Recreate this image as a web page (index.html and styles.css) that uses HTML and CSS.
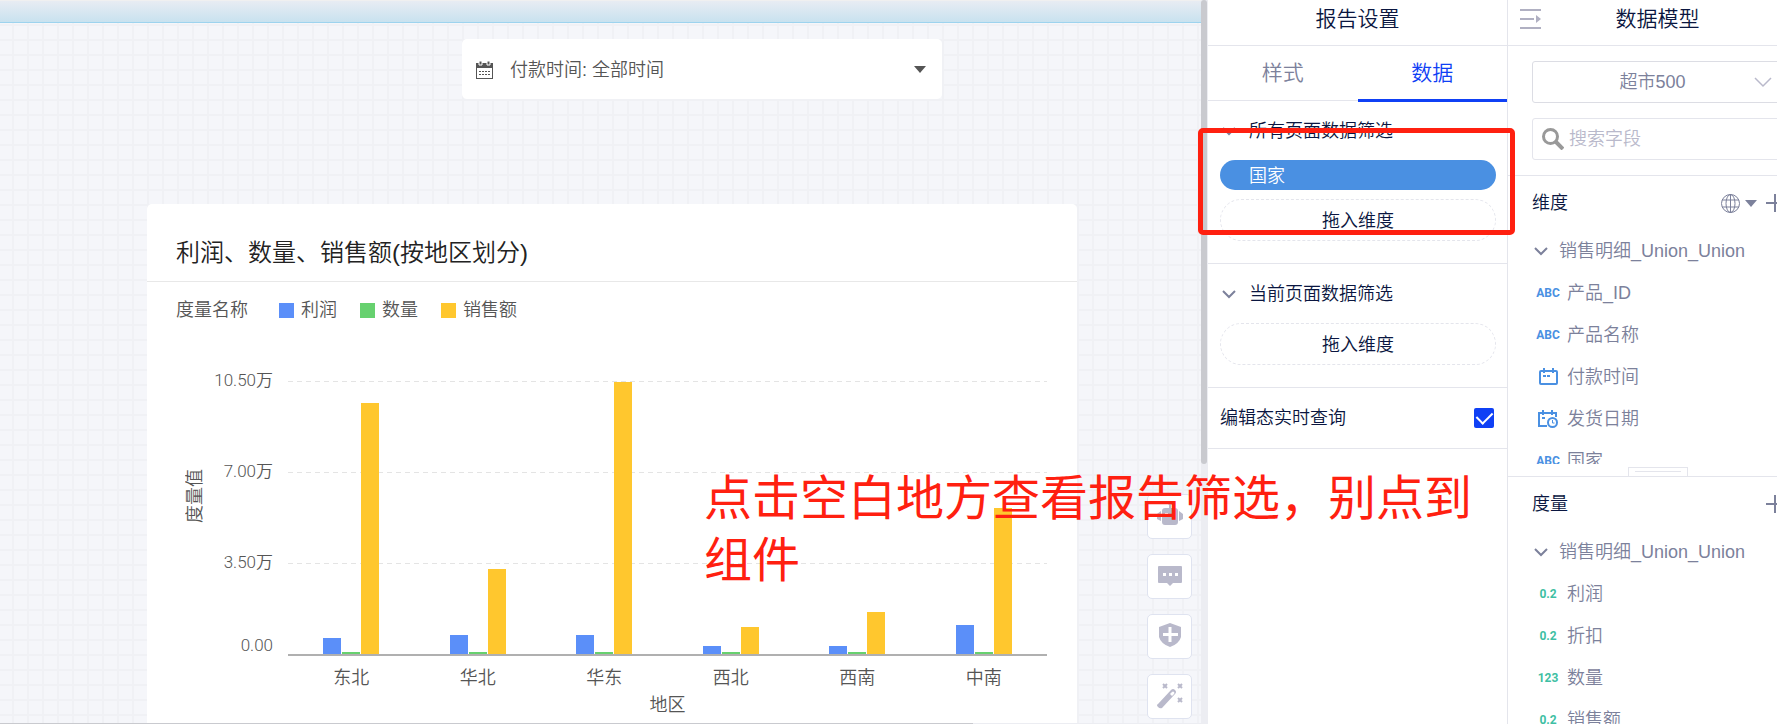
FILE: index.html
```html
<!DOCTYPE html>
<html lang="zh-CN">
<head>
    <meta charset="utf-8">
    <meta name="viewport" content="width=device-width, initial-scale=1.0">
    <title>报告设置</title>
    <link rel="stylesheet" href="styles.css">
</head>
<body>
<div class="app">
    <main class="canvas">
        <div class="dropBar"></div>
        <button class="filterCard" type="button">
            <svg class="calIcon" width="17" height="18" viewBox="0 0 17 18">
                <path d="M0 2h17v16H0z" fill="#555"/>
                <path d="M1 7h15v10H1z" fill="#fff"/>
                <path d="M3 0h3v4H3zM11 0h3v4h-3z" fill="#555" stroke="#fff" stroke-width="1"/>
                <path d="M3 10.500h11M3 13.500h11" stroke="#555" stroke-dasharray="2 1"/>
            </svg>
            <span>付款时间: 全部时间</span>
            <svg class="caret" width="12" height="7" viewBox="0 0 12 7"><path d="M0 0h12L6 7z" fill="#555"/></svg>
        </button>

        <section class="chartCard">
            <h2>利润、数量、销售额(按地区划分)</h2>
            <div class="legend">
                <span class="legendName">度量名称</span>
                <span class="legendItem"><i class="profit"></i>利润</span>
                <span class="legendItem"><i class="count"></i>数量</span>
                <span class="legendItem"><i class="sales"></i>销售额</span>
            </div>
            <div class="chart">
                <div class="yTitle">度量值</div>
                <div class="yAxis"><span>10.50万</span><span>7.00万</span><span>3.50万</span><span>0.00</span></div>
                <div class="plot">
                    <div class="gridLine"></div>
                    <div class="gridLine"></div>
                    <div class="gridLine"></div>
                    <div class="bars">
                        <div class="group"><i class="profit" style="height:6%"></i><i class="count"></i><i class="sales" style="height:92%"></i></div>
                        <div class="group"><i class="profit" style="height:7%"></i><i class="count"></i><i class="sales" style="height:31%"></i></div>
                        <div class="group"><i class="profit" style="height:7%"></i><i class="count"></i><i class="sales" style="height:99.600%"></i></div>
                        <div class="group"><i class="profit" style="height:3%"></i><i class="count"></i><i class="sales" style="height:10%"></i></div>
                        <div class="group"><i class="profit" style="height:3%"></i><i class="count"></i><i class="sales" style="height:15.500%"></i></div>
                        <div class="group"><i class="profit" style="height:10.500%"></i><i class="count"></i><i class="sales" style="height:53.500%"></i></div>
                    </div>
                </div>
                <div class="xAxis"><span>东北</span><span>华北</span><span>华东</span><span>西北</span><span>西南</span><span>中南</span></div>
                <div class="xTitle">地区</div>
            </div>
        </section>

        <div class="tools">
            <button type="button" aria-label="助手">
                <svg width="28" height="28" viewBox="0 0 28 28" fill="#b9b9cb"><path d="M12 0h4v2l-1 1v3h4q3 0 3 3v11q0 3-3 3H9q-3 0-3-3V9q0-3 3-3h4V3l-1-1zM1 12l4-3v10l-4-2zM27 12l-4-3v10l4-2z"/><path d="M9 11h3v3H9zM16 11h3v3h-3z" fill="#fff"/></svg>
            </button>
            <button type="button" aria-label="评论">
                <svg width="28" height="28" viewBox="0 0 28 28"><path d="M3 4h22q1 0 1 1v15q0 1-1 1h-8l-3 3-3-3H3q-1 0-1-1V5q0-1 1-1z" fill="#b9b9cb"/><path d="M7 11h3v3H7zM13 11h3v3h-3zM19 11h3v3h-3z" fill="#fff"/></svg>
            </button>
            <button type="button" aria-label="防护">
                <svg width="28" height="28" viewBox="0 0 28 28"><path d="M14 1l11 4v10q-2 7-11 10Q5 22 3 15V5z" fill="#b9b9cb"/><path d="M14 5v15M7 12.500h15" stroke="#fff" stroke-width="3"/></svg>
            </button>
            <button type="button" aria-label="美化">
                <svg width="28" height="28" viewBox="0 0 28 28"><path d="M2 22L15 8q2-2 4 0t0 4L6 26q-2 1-4-1t0-3z" fill="#b9b9cb"/><path d="M14 12l2-2q1-1 2 0t0 2l-2 2z" fill="#fff"/><path d="M7 2l4 4M11 2L7 6M22 2l4 4M26 2l-4 4M22 16l4 4M26 16l-4 4" stroke="#b9b9cb" stroke-width="2"/></svg>
            </button>
        </div>
        <div class="vTrack"><div class="vThumb"></div></div>
        <div class="hTrack"><div class="hThumb"></div></div>
    </main>

    <aside class="settings">
        <h1>报告设置</h1>
        <div class="tabs">
            <button type="button">样式</button>
            <button type="button" class="active">数据</button>
        </div>
        <section class="filterGroup">
            <h3><svg class="chevron" width="14" height="9" viewBox="0 0 14 9"><path d="M1 1l6 6 6-6"/></svg>所有页面数据筛选</h3>
            <div class="pill">国家</div>
            <div class="dropZone">拖入维度</div>
        </section>
        <section class="filterGroup">
            <h3><svg class="chevron" width="14" height="9" viewBox="0 0 14 9"><path d="M1 1l6 6 6-6"/></svg>当前页面数据筛选</h3>
            <div class="dropZone">拖入维度</div>
        </section>
        <label class="liveQuery" for="live">编辑态实时查询<input type="checkbox" id="live" checked></label>
        <div class="markBox"></div>
    </aside>

    <aside class="model">
        <header>
            <svg width="22" height="22" viewBox="0 0 22 22"><path d="M0 2h21M0 11h14M0 20h21" stroke="#b0b0c2" stroke-width="2"/><path d="M16 7l5 4-5 4z" fill="#b0b0c2"/></svg>
            <h1>数据模型</h1>
        </header>
        <div class="source">
            <div class="selectWrap">
                <select aria-label="数据源"><option>超市500</option></select>
                <svg width="18" height="11" viewBox="0 0 18 11"><path d="M1 1l8 8 8-8" fill="none" stroke="#b9b9cb" stroke-width="1.500"/></svg>
            </div>
            <div class="search">
                <svg width="22" height="22" viewBox="0 0 22 22"><circle cx="8.500" cy="8.500" r="7" fill="none" stroke="#999" stroke-width="3"/><path d="M13 13l8 8" stroke="#999" stroke-width="4"/></svg>
                <input type="text" placeholder="搜索字段" aria-label="搜索字段">
            </div>
        </div>
        <section class="fields dims">
            <h3>维度
                <span class="acts">
                    <svg width="19" height="19" viewBox="0 0 19 19" fill="none" stroke="#7c819b"><circle cx="9.500" cy="9.500" r="9"/><ellipse cx="9.500" cy="9.500" rx="4.500" ry="9"/><path d="M9.500 0v19M1 6h17M1 13h17"/></svg>
                    <svg width="12" height="7" viewBox="0 0 12 7"><path d="M0 0h12L6 7z" fill="#7c819b"/></svg>
                    <svg class="plus" width="20" height="20" viewBox="0 0 20 20"><path d="M10 1v18M1 10h18" stroke="#7c819b" stroke-width="2"/></svg>
                </span>
            </h3>
            <ul>
                <li class="root"><svg class="chevron" width="14" height="9" viewBox="0 0 14 9"><path d="M1 1l6 6 6-6"/></svg>销售明细_Union_Union</li>
                <li><b>ABC</b>产品_ID</li>
                <li><b>ABC</b>产品名称</li>
                <li><b><svg width="19" height="18" viewBox="0 0 19 18" fill="none" stroke="#4a90e2" stroke-width="2"><rect x="1" y="3" width="17" height="13" rx="1"/><path d="M5 0v5M14 0v5M4 8h3M8 8h3"/></svg></b>付款时间</li>
                <li><b><svg width="20" height="18" viewBox="0 0 20 18" fill="none" stroke="#4a90e2" stroke-width="2"><path d="M18 7V3H1v13h8"/><path d="M5 0v5M14 0v5M4 8h3"/><circle cx="14.500" cy="12.500" r="4.500"/><path d="M14.500 10v3h2" stroke-width="1"/></svg></b>发货日期</li>
                <li><b>ABC</b>国家</li>
            </ul>
        </section>
        <div class="splitter"><div class="handle"></div></div>
        <section class="fields meas">
            <h3>度量
                <span class="acts"><svg class="plus" width="20" height="20" viewBox="0 0 20 20"><path d="M10 1v18M1 10h18" stroke="#7c819b" stroke-width="2"/></svg></span>
            </h3>
            <ul>
                <li class="root"><svg class="chevron" width="14" height="9" viewBox="0 0 14 9"><path d="M1 1l6 6 6-6"/></svg>销售明细_Union_Union</li>
                <li><b>0.2</b>利润</li>
                <li><b>0.2</b>折扣</li>
                <li><b>123</b>数量</li>
                <li><b>0.2</b>销售额</li>
            </ul>
        </section>
    </aside>
    <p class="note">点击空白地方查看报告筛选，别点到<br>组件</p>
</div>
</body>
</html>
```
FILE: styles.css
```css
*{ box-sizing: border-box; }
body{
    margin: 0; overflow: hidden; font-size: 18px; line-height: 26px; color: #0a1640;
    font-family: "Liberation Sans", "Noto Sans CJK SC", sans-serif; font-weight: 350;
}
h1,h2,h3,ul,p{ margin: 0; padding: 0; font-weight: 350; }
h1{ font-size: 21px; }
h3{ font-size: 18px; }
button,input,select{ font: inherit; color: inherit; }
i{ display: block; }
.app{
    position: relative; display: flex; height: 100vh; overflow: hidden;
}
.chevron path{ fill: none; stroke: #7c819b; stroke-width: 2; }

/* canvas */
.canvas{
    position: relative; flex: 1; min-width: 0; overflow: hidden;
    background-color: #f5f6fa;
    background-image: linear-gradient(90deg, #f0f1f5 2px, transparent 2px), linear-gradient(#f0f1f5 2px, transparent 2px);
    background-size: 15px 15px; background-position: 12px 9px;
}
.dropBar{
    height: 23px; border-top: 1px solid #f0f0f0; border-bottom: 1px solid #9dd3ee;
    background: linear-gradient(#e8ecf3, #c8e2ef);
}
.filterCard{
    display: flex; align-items: center; width: 480px; height: 60px; margin: 16px 0 0 462px; padding: 1px 16px 0 14px;
    border: 0; border-radius: 5px; background: #fff; color: #555; text-align: left;
}
.filterCard span{ flex: 1; margin-left: 17px; }
.chartCard{
    margin: 105px 131px 0 147px; height: 560px; border-radius: 5px; background: #fff; color: #555;
}
.chartCard h2{
    height: 78px; padding: 32px 29px 0; border-bottom: 1px solid #e8e8e8;
    font-size: 24px; line-height: 34px; color: #222;
}
.legend{
    display: flex; align-items: center; height: 56px; padding: 0 29px;
}
.legendName{ margin-right: 31px; }
.legendItem{
    display: flex; align-items: center; gap: 7px; margin-right: 23px;
}
.legendItem i{ width: 15px; height: 15px; }
.profit{ background: #5b8ff9; }
.count{ background: #67d16f; }
.sales{ background: #ffc72e; }
.chart{
    display: grid; grid-template-columns: 24px 67px 1fr; grid-template-rows: 275px 36px 24px;
    margin: 43px 30px 0 35px;
}
.yTitle{
    height: 230px; writing-mode: vertical-rl; text-orientation: sideways; transform: rotate(180deg); text-align: center;
}
.yAxis{
    display: flex; flex-direction: column; margin-top: -14px; text-align: right;
    font-size: 17px; font-family: Roboto, "Noto Sans CJK SC", sans-serif;
}
.yAxis span{ flex: 0 0 91px; }
.yAxis span:last-child{ flex-basis: 26px; margin-top: -8px; }
.plot{
    position: relative; display: flex; flex-direction: column; margin-left: 15px; border-bottom: 2px solid #b0b0b0;
}
.gridLine{
    flex: 1; background: repeating-linear-gradient(90deg, #e4e4e4 0 5px, transparent 5px 9px) 0 0 / 100% 1px no-repeat;
}
.bars{
    position: absolute; inset: 0; display: flex;
}
.group{
    flex: 1; display: flex; justify-content: center; align-items: flex-end; gap: 1px;
}
.group i{ width: 18px; }
.group .count{ height: 2px; }
.xAxis{
    grid-column: 3; display: flex; margin-left: 15px; padding-top: 9px;
}
.xAxis span{ flex: 1; text-align: center; }
.xTitle{ grid-column: 3; padding-left: 15px; text-align: center; }
.tools{
    position: absolute; right: 16px; bottom: 5px; display: flex; flex-direction: column; gap: 15px;
}
.tools button{
    display: flex; align-items: center; justify-content: center; width: 45px; height: 45px; padding: 0 0 2px;
    border: 1px solid #dfe3f0; border-radius: 5px; background: #fff;
}
.vTrack{
    position: absolute; top: 0; right: 0; bottom: 0; width: 7px; background: #ecedf2;
}
.vThumb{
    width: 6px; height: 464px; border-radius: 3px; background: #c9cacf;
}
.hTrack{
    position: absolute; left: 0; right: 7px; bottom: 0; height: 1px; background: #ecedf2;
}
.hThumb{ width: 81%; height: 1px; background: #c9cacf; }

/* report settings */
.settings{
    position: relative; width: 300px; flex: none; border-right: 1px solid #e4e5ec; background: #fff;
}
.settings > h1{
    height: 46px; padding-top: 6px; border-bottom: 1px solid #e4e5ec; text-align: center;
}
.tabs{ display: flex; height: 55px; border-bottom: 1px solid #e4e5ec; }
.tabs button{
    flex: 1; height: 56px; padding: 0; border: 0; border-bottom: 3px solid transparent; background: none;
    font-size: 21px; color: #7c819b;
}
.tabs .active{ border-color: #0f40f5; color: #0f40f5; }
.filterGroup{
    padding: 18px 11px 22px 12px; border-bottom: 1px solid #e4e5ec;
}
.filterGroup h3{ display: flex; align-items: center; gap: 13px; height: 24px; padding-left: 2px; }
.pill{
    height: 30px; margin: 17px 0 9px; padding: 0 29px; border-radius: 15px; background: #4a90e2; color: #fff; line-height: 32px;
}
.dropZone{
    height: 42px; border: 1px dashed #e4e5ec; border-radius: 21px; line-height: 42px; text-align: center;
}
h3 + .dropZone{ margin-top: 17px; }
.liveQuery{
    display: flex; align-items: center; justify-content: space-between; height: 61px; padding: 0 13px 0 12px; border-bottom: 1px solid #e4e5ec;
}
.liveQuery input{
    appearance: none; width: 20px; height: 20px; margin: 0; border-radius: 2px; background: #0f40f5;
    display: grid; place-items: center;
}
.liveQuery input:checked::after{
    content: ""; width: 13px; height: 8px; border: solid #fff; border-width: 0 0 2px 2px; rotate: -45deg; margin-bottom: 4px;
}
.markBox{
    position: absolute; left: -10px; top: 128px; width: 317px; height: 107px; border: 5px solid #ff2010; border-radius: 5px; z-index: 2;
}

/* data model */
.model{
    flex: none; width: 299px; margin-right: -30px; background: #fff; color: #7c819b;
}
.model header{
    display: flex; align-items: center; height: 46px; padding: 0 12px 8px; border-bottom: 1px solid #e4e5ec; color: #0a1640;
}
.model header h1{ flex: 1; margin-right: 22px; text-align: center; }
.source{
    display: flex; flex-direction: column; gap: 15px; height: 130px; padding: 15px 0 0 24px; border-bottom: 1px solid #e4e5ec;
}
.selectWrap,.search{
    display: flex; align-items: center; height: 42px; border: 1px solid #dcdde4; border-radius: 3px;
}
.selectWrap{ padding-right: 34px; }
.search{ border-color: #e4e5ec; padding-left: 9px; gap: 5px; }
.selectWrap select{
    flex: 1; height: 40px; margin-right: -18px; padding: 0; border: 0; appearance: none; background: none; text-align: center; text-align-last: center;
}
.search input{ width: 180px; height: 40px; padding: 0; border: 0; outline: 0; background: none; }
.search input::placeholder{ color: #b9b9cb; opacity: 1; }
.fields h3{
    display: flex; align-items: center; justify-content: space-between; height: 54px; padding: 0 22px 0 24px; color: #0a1640;
}
.acts{ display: flex; align-items: center; gap: 5px; }
.plus{ margin-left: 3px; }
.fields ul{ list-style: none; }
.fields li{ display: flex; align-items: center; height: 42px; padding-left: 29px; }
.fields .root{ padding-left: 26px; gap: 11px; }
.fields b{
    display: flex; justify-content: center; width: 22px; margin-right: 8px;
    font: 700 12px Roboto, sans-serif; color: #4a90e2;
}
.meas b{ color: #3fbfa4; }
.dims{ height: 288px; overflow: hidden; }
.splitter{
    height: 13px; display: flex; justify-content: center; align-items: flex-end; border-bottom: 1px solid #e4e5ec;
}
.handle{
    width: 60px; height: 9px; border: 1px solid #e4e5ec; border-bottom: 0; padding: 3px 6px;
}
.handle::before{ content: ""; display: block; height: 1px; background: #e4e5ec; }

.note{
    position: absolute; left: 704px; top: 468px; z-index: 3; width: 800px;
    color: #ff2010; font-size: 48px; font-weight: 400; line-height: 62px; pointer-events: none;
}
```
